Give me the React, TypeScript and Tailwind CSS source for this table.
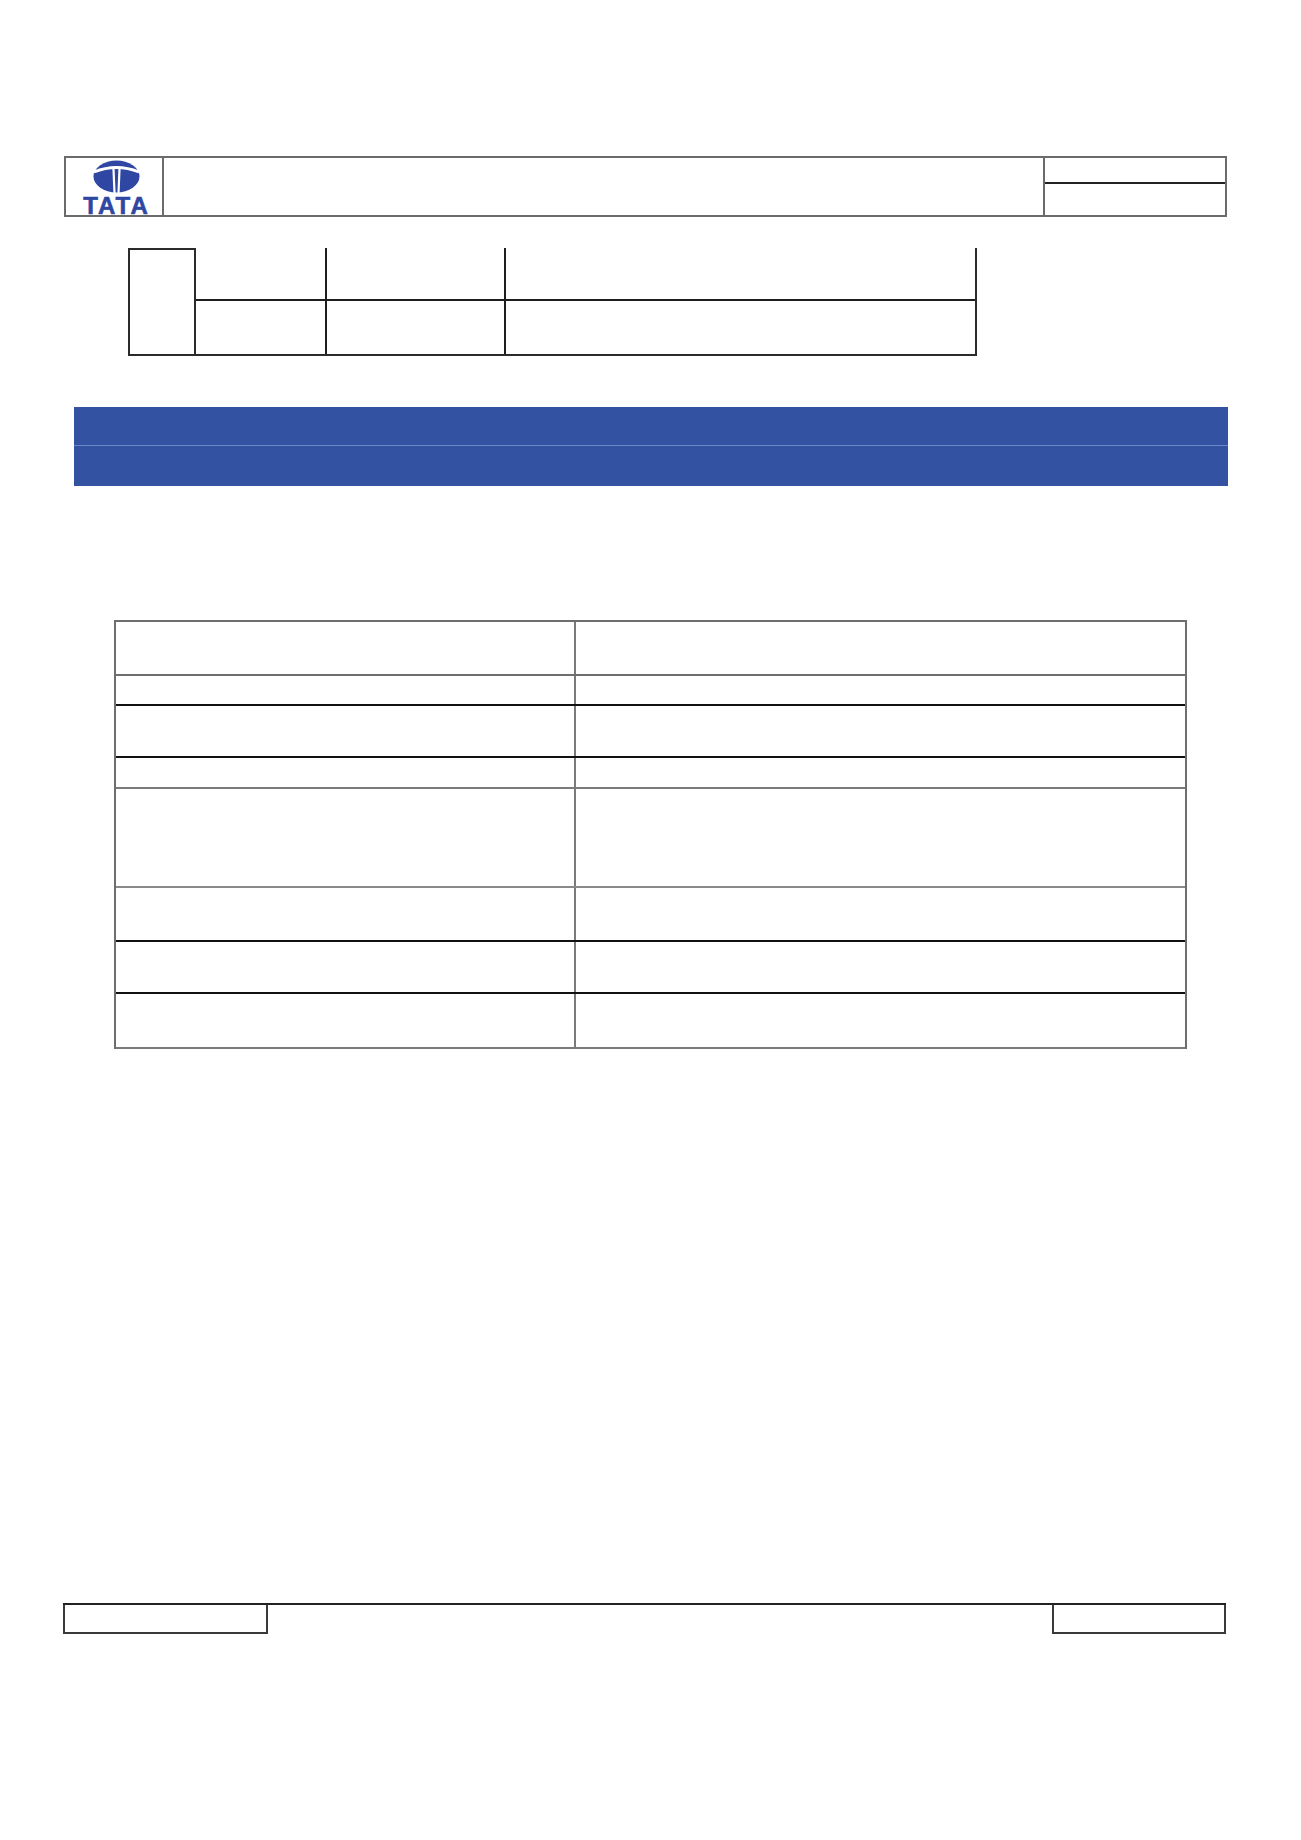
import React from "react";

function TataLogo() {
  return (
    <div className="flex flex-col items-center pl-[5px] pt-[2px]">
      <svg width="47" height="33" viewBox="0 0 47 33">
        <ellipse cx="23.5" cy="16.5" rx="23" ry="16" fill="#2f47a3" />
        {/* crossbar of the T */}
        <path d="M1 12 Q23.5 3 46 12" stroke="#fff" strokeWidth="2.8" fill="none" />
        {/* gaps beside the stem */}
        <path d="M20.5 9 L21.5 33" stroke="#fff" strokeWidth="2.2" />
        <path d="M26.5 9 L25.5 33" stroke="#fff" strokeWidth="2.2" />
      </svg>
      <span className="mt-[4px] text-[24px] leading-[18px] font-black tracking-[2px] text-[#2f47a3] [font-family:'Liberation_Sans',Arial,sans-serif] [-webkit-text-stroke:0.6px_#2f47a3]">
        TATA
      </span>
    </div>
  );
}

const rows = [
  { h: "h-[54px]", line: "border-[#6e6e6e]" },
  { h: "h-[30px]", line: "border-[#111]" },
  { h: "h-[52px]", line: "border-[#111]" },
  { h: "h-[31px]", line: "border-[#7a7a7a]" },
  { h: "h-[99px]", line: "border-[#8a8a8a]" },
  { h: "h-[54px]", line: "border-[#111]" },
  { h: "h-[52px]", line: "border-[#111]" },
  { h: "h-[55px]", line: "border-[#7a7a7a]" },
];

export default function App() {
  return (
    <div className="min-h-[1840px] w-[1301px] bg-white pt-[156px] [font-family:'Liberation_Sans',Arial,sans-serif]">
      {/* Header */}
      <div className="ml-[64px] flex h-[61px] w-[1163px] border-2 border-[#6b6b6b]">
        <div className="flex w-[98px] justify-center border-r-2 border-[#6b6b6b]">
          <TataLogo />
        </div>
        <div className="flex-1 border-r-2 border-[#6b6b6b]" />
        <div className="flex w-[180px] flex-col">
          <div className="h-[26px] border-b-2 border-[#222]" />
          <div className="flex-1" />
        </div>
      </div>

      {/* Revision table */}
      <div className="ml-[128px] mt-[31px] flex h-[108px] w-[849px]">
        <div className="w-[68px] border-2 border-[#2b2b2b]" />
        <div className="grid flex-1 grid-cols-[131px_179px_1fr] grid-rows-2 border-b-2 border-r-2 border-[#2b2b2b]">
          <div className="border-b-2 border-r-2 border-[#1e1e1e]" />
          <div className="border-b-2 border-r-2 border-[#1e1e1e]" />
          <div className="border-b-2 border-[#1e1e1e]" />
          <div className="border-r-2 border-[#1e1e1e]" />
          <div className="border-r-2 border-[#1e1e1e]" />
          <div />
        </div>
      </div>

      {/* Blue band */}
      <div className="ml-[74px] mt-[51px] flex h-[79px] w-[1154px] flex-col bg-[#3452a2]">
        <div className="h-[39px] border-b border-[#6d86c6]" />
        <div className="flex-1" />
      </div>

      {/* Info table */}
      <div className="ml-[114px] mt-[134px] w-[1073px] border-x-2 border-t-2 border-[#6e6e6e]">
        {rows.map((r, i) => (
          <div key={i} className={`flex ${r.h} border-b-2 ${r.line}`}>
            <div className="w-[460px] border-r-2 border-[#7a7a7a]" />
            <div className="flex-1" />
          </div>
        ))}
      </div>

      {/* Footer */}
      <div className="ml-[63px] mt-[554px] flex h-[31px] w-[1163px] border-t-2 border-[#222]">
        <div className="w-[205px] border-x-2 border-b-2 border-[#3a3a3a]" />
        <div className="flex-1" />
        <div className="w-[174px] border-x-2 border-b-2 border-[#3a3a3a]" />
      </div>
    </div>
  );
}
